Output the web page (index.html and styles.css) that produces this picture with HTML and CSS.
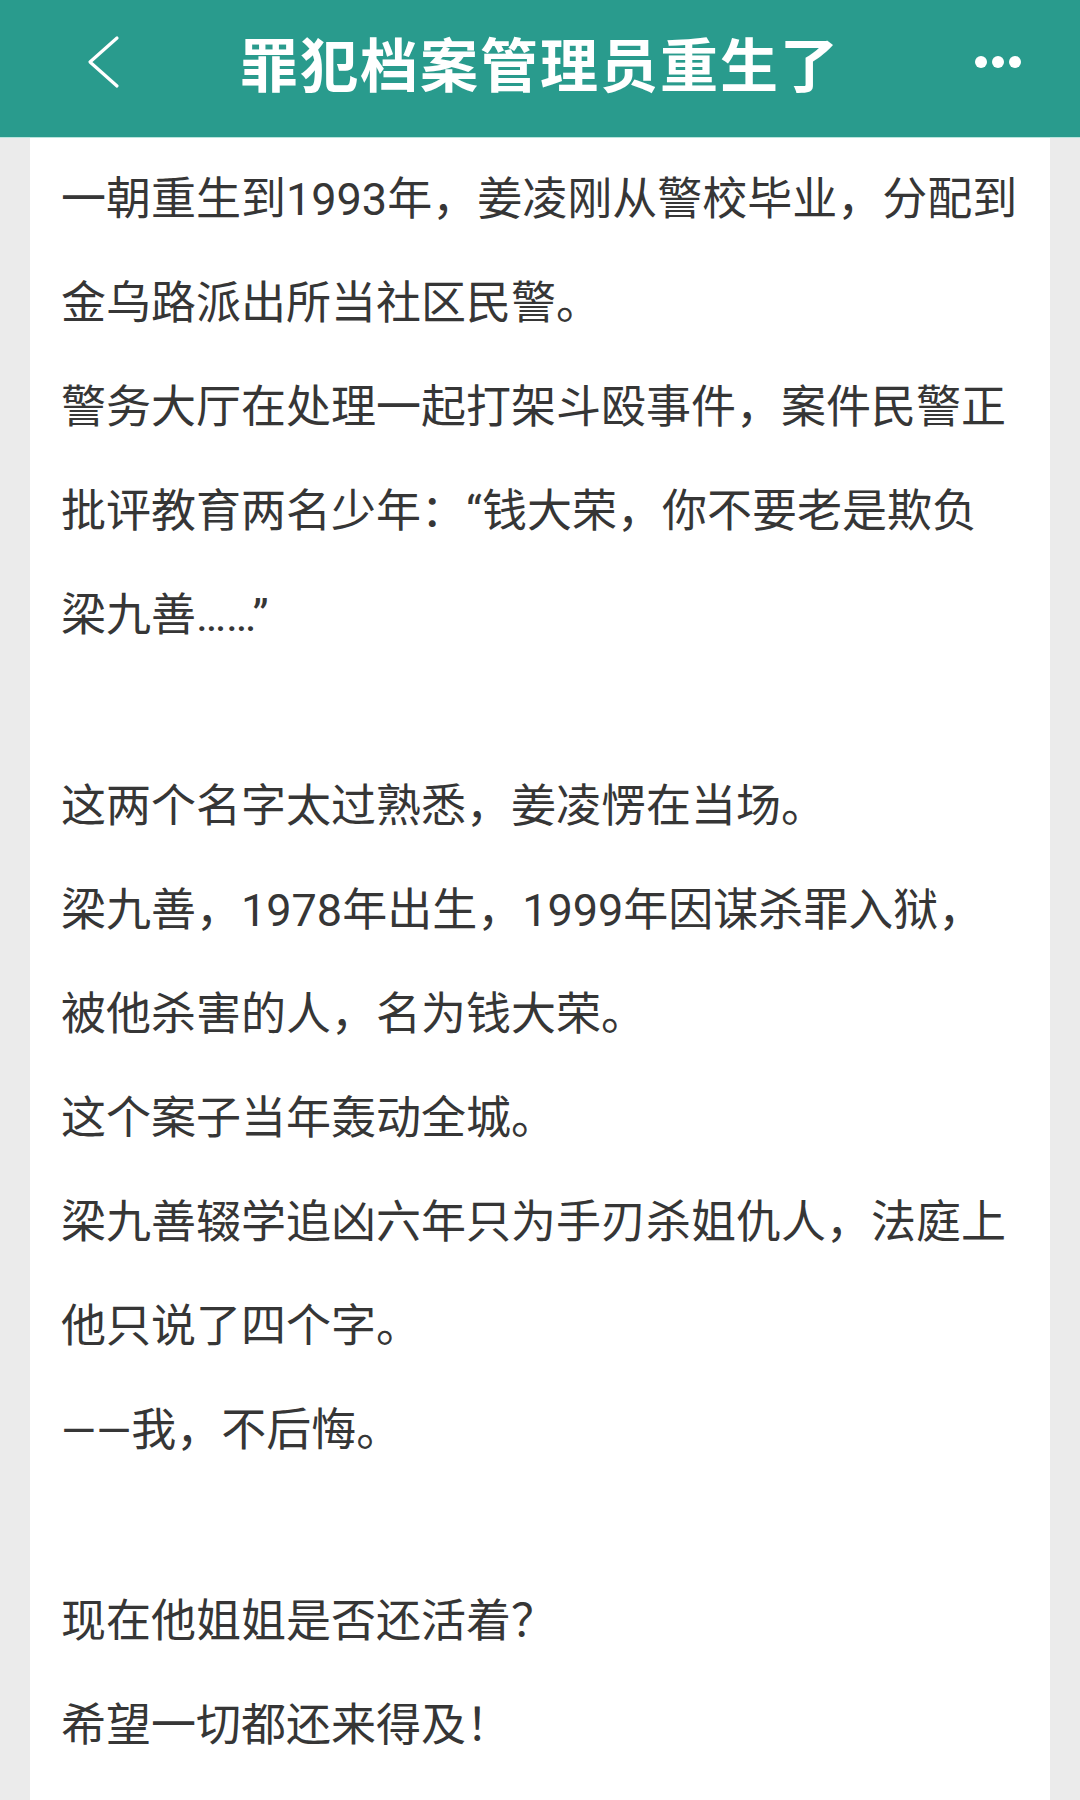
FILE: index.html
```html
<!DOCTYPE html>
<html lang="zh-CN">
<head>
<meta charset="utf-8">
<title>罪犯档案管理员重生了</title>
<link rel="stylesheet" href="styles.css">
</head>
<body>
<header class="topbar">
  <button class="nav-btn back" aria-label="返回">
    <svg width="40" height="60" viewBox="0 0 40 60"><polyline points="31,6 4,30 31,54" fill="none" stroke="#ffffff" stroke-width="3.2" stroke-linecap="round" stroke-linejoin="round"/></svg>
  </button>
  <h1 class="title">罪犯档案管理员重生了</h1>
  <button class="nav-btn more" aria-label="更多">
    <span class="dot"></span><span class="dot"></span><span class="dot"></span>
  </button>
</header>
<main class="card">
  <p>一朝重生到1993年，姜凌刚从警校毕业，分配到<br>金乌路派出所当社区民警。</p>
  <p>警务大厅在处理一起打架斗殴事件，案件民警正<br>批评教育两名少年：“钱大荣，你不要老是欺负<br>梁九善……”</p>
  <p class="after-blank">这两个名字太过熟悉，姜凌愣在当场。</p>
  <p>梁九善，1978年出生，1999年因谋杀罪入狱，<br>被他杀害的人，名为钱大荣。</p>
  <p>这个案子当年轰动全城。</p>
  <p>梁九善辍学追凶六年只为手刃杀姐仇人，法庭上<br>他只说了四个字。</p>
  <p>——我，不后悔。</p>
  <p class="after-blank">现在他姐姐是否还活着？</p>
  <p>希望一切都还来得及！</p>
</main>
</body>
</html>
```

FILE: styles.css
```css
html, body {
  margin: 0;
  padding: 0;
}
body {
  width: 1080px;
  min-height: 1800px;
  background: #ebebeb;
  font-family: Roboto, "Noto Sans CJK SC", sans-serif;
  display: flex;
  flex-direction: column;
}
.topbar {
  box-sizing: content-box;
  height: 123px;
  padding: 0 59px 14px 86px;
  background: #299b8d;
  border-bottom: 1px solid #b9e4dd;
  display: grid;
  grid-template-columns: 1fr auto 1fr;
  align-items: center;
  margin-right: 0;
}
.nav-btn {
  background: none;
  border: 0;
  padding: 0;
  display: flex;
  align-items: center;
  gap: 5px;
}
.nav-btn.back {
  justify-self: start;
}
.nav-btn.more {
  justify-self: end;
}
.dot {
  width: 12px;
  height: 12px;
  border-radius: 50%;
  background: #ffffff;
}
.title {
  margin: 0 0 0 -27px;
  color: #ffffff;
  font-family: "Noto Sans CJK SC", sans-serif;
  font-weight: 700;
  font-size: 58px;
  letter-spacing: 2px;
  line-height: 1;
}
.card {
  flex: 1;
  margin: 0 30px;
  background: #ffffff;
  padding: 10px 31px 20px;
  color: #363636;
  font-size: 45px;
  line-height: 104px;
}
.card p {
  margin: 0;
  white-space: nowrap;
}
.card p.after-blank {
  margin-top: 87px;
}
```
